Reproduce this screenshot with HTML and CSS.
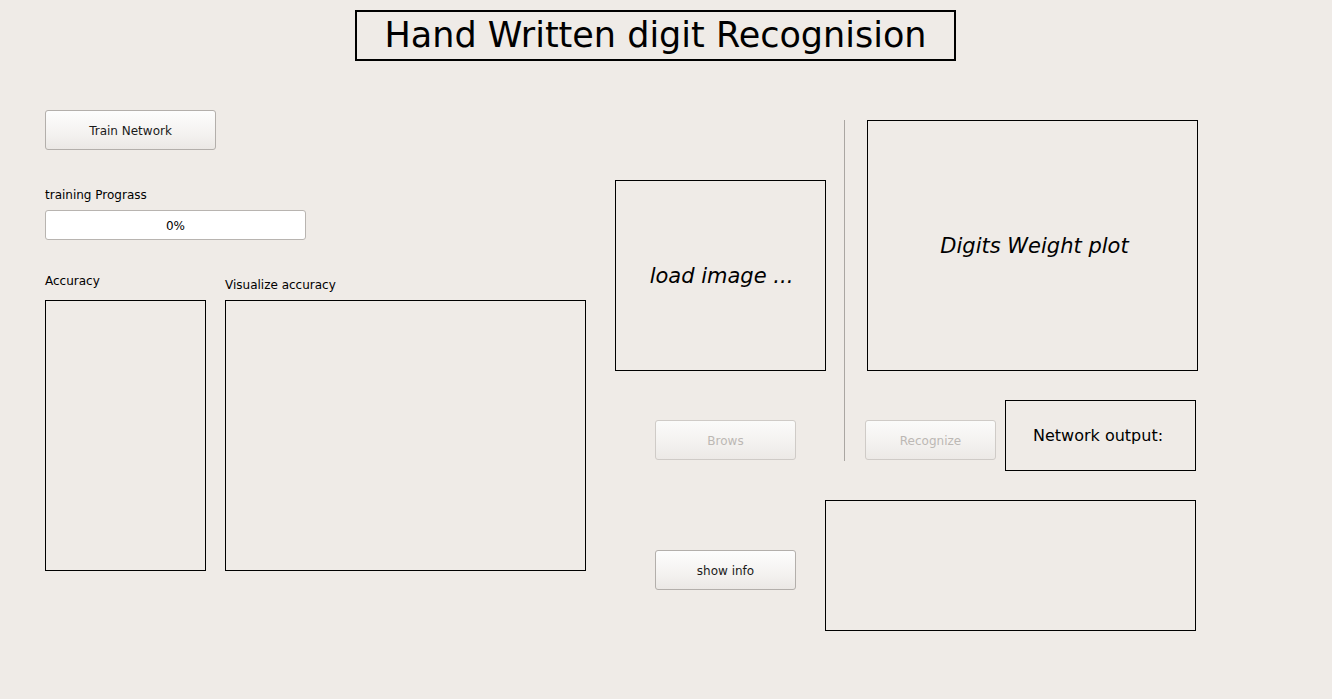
FILE: index.html
```html
<!DOCTYPE html>
<html>
<head>
<meta charset="utf-8">
<title>Hand Written digit Recognision</title>
<link rel="stylesheet" href="styles.css">
</head>
<body>
<div class="window">
  <div class="title">Hand Written digit Recognision</div>
  <div class="main">
    <div class="col-train">
      <button class="btn btn-train">Train Network</button>
      <div class="label label-progress">training Prograss</div>
      <div class="progress">0%</div>
      <div class="acc-row">
        <div class="acc-col">
          <div class="label label-acc">Accuracy</div>
          <div class="frame frame-acc"></div>
        </div>
        <div class="viz-col">
          <div class="label label-viz">Visualize accuracy</div>
          <div class="frame frame-viz"></div>
        </div>
      </div>
    </div>
    <div class="region">
      <div class="top-row">
        <div class="col-load">
          <div class="frame frame-load"><span class="italic">load image ...</span></div>
          <button class="btn btn-brows" disabled>Brows</button>
        </div>
        <div class="vline"></div>
        <div class="col-plot">
          <div class="frame frame-plot"><span class="italic">Digits Weight plot</span></div>
          <div class="recog-row">
            <button class="btn btn-recog" disabled>Recognize</button>
            <div class="frame frame-output">Network output:</div>
          </div>
        </div>
      </div>
      <div class="bottom-row">
        <button class="btn btn-info">show info</button>
        <div class="frame frame-info"></div>
      </div>
    </div>
  </div>
</div>
</body>
</html>
```
FILE: styles.css
```css
* { box-sizing: border-box; }
html, body {
  margin: 0;
  padding: 0;
  background: #efebe7;
}
body {
  font-family: "DejaVu Sans", "Liberation Sans", sans-serif;
  font-size: 12px;
  color: #000;
  width: 1332px;
  height: 699px;
  overflow: hidden;
}
.window {
  padding-top: 10px;
}
.title {
  margin-left: 355px;
  width: 601px;
  height: 51px;
  border: 2px solid #000;
  font-size: 35px;
  display: flex;
  align-items: center;
  justify-content: center;
  line-height: 1;
  padding-bottom: 1px;
}
.main {
  display: flex;
  align-items: flex-start;
  margin-top: 49px;
  padding-left: 45px;
}
.col-train {
  width: 541px;
  display: flex;
  flex-direction: column;
  align-items: flex-start;
}
.btn {
  font-family: "DejaVu Sans", "Liberation Sans", sans-serif;
  font-size: 12px;
  color: #1a1a1a;
  height: 40px;
  border: 1px solid #b3afab;
  border-radius: 3px;
  background: linear-gradient(to bottom, #fdfdfd 0%, #f4f2f0 60%, #ebe8e5 100%);
  padding: 2px 0 0 0;
  margin: 0;
}
.btn[disabled] {
  color: #bcb8b4;
  border-color: #cfcbc7;
  background: linear-gradient(to bottom, #fbfbfa 0%, #f3f1ef 60%, #ece9e6 100%);
}
.btn-train { width: 171px; }
.label {
  line-height: 16px;
  height: 16px;
  white-space: nowrap;
}
.label-progress { margin-top: 37px; }
.progress {
  margin-top: 7px;
  width: 261px;
  height: 30px;
  background: #fff;
  border: 1px solid #b8b4b0;
  border-radius: 3px;
  display: flex;
  align-items: center;
  justify-content: center;
  padding-top: 2px;
}
.acc-row {
  display: flex;
  align-items: flex-start;
  margin-top: 33px;
  gap: 19px;
}
.acc-col, .viz-col {
  display: flex;
  flex-direction: column;
}
.label-acc { margin-bottom: 11px; }
.label-viz { margin-top: 4px; margin-bottom: 7px; }
.frame {
  border: 1px solid #000;
}
.frame-acc { width: 161px; height: 271px; }
.frame-viz { width: 361px; height: 271px; }
.region {
  margin-left: 29px;
  margin-top: 10px;
  display: flex;
  flex-direction: column;
}
.top-row {
  display: flex;
  align-items: flex-start;
}
.col-load {
  width: 211px;
  display: flex;
  flex-direction: column;
  align-items: flex-start;
}
.italic {
  font-style: italic;
  font-size: 21px;
  white-space: nowrap;
}
.frame-load {
  margin-top: 60px;
  width: 211px;
  height: 191px;
  display: flex;
  align-items: center;
  justify-content: center;
  padding-left: 2px;
}
.btn-brows {
  margin-top: 49px;
  margin-left: 40px;
  width: 141px;
}
.vline {
  margin-left: 18px;
  width: 1px;
  height: 341px;
  background: #aaa6a2;
}
.col-plot {
  margin-left: 20px;
  display: flex;
  flex-direction: column;
  align-items: flex-start;
}
.frame-plot {
  margin-left: 2px;
  width: 331px;
  height: 251px;
  display: flex;
  align-items: center;
  justify-content: center;
  padding-left: 4px;
}
.recog-row {
  display: flex;
  align-items: flex-start;
  margin-top: 29px;
}
.btn-recog {
  margin-top: 20px;
  width: 131px;
}
.frame-output {
  margin-left: 9px;
  width: 191px;
  height: 71px;
  font-size: 16px;
  display: flex;
  align-items: center;
  padding-left: 27px;
  padding-bottom: 0;
  white-space: nowrap;
}
.bottom-row {
  display: flex;
  align-items: flex-start;
  margin-top: 29px;
}
.btn-info {
  margin-top: 50px;
  margin-left: 40px;
  width: 141px;
}
.frame-info {
  margin-left: 29px;
  width: 371px;
  height: 131px;
}
```
